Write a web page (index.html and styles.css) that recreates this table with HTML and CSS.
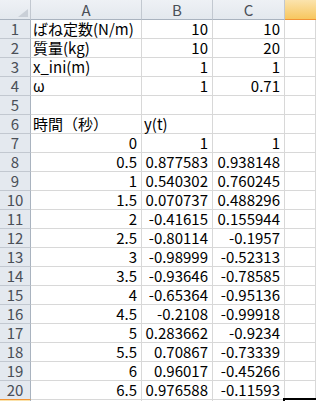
FILE: index.html
```html
<!DOCTYPE html>
<html lang="ja">
<head>
<meta charset="utf-8">
<link rel="stylesheet" href="styles.css">
</head>
<body>
<div class="sheet">
  <div class="hd corner"><span class="tri"></span></div>
  <div class="hd col">A</div>
  <div class="hd col">B</div>
  <div class="hd col">C</div>
  <div class="hd col sel"></div>

  <div class="hd row">1</div><div class="c">ばね定数(N/m)</div><div class="c n">10</div><div class="c n">10</div><div class="c"></div>
  <div class="hd row">2</div><div class="c">質量(kg)</div><div class="c n">10</div><div class="c n">20</div><div class="c"></div>
  <div class="hd row">3</div><div class="c">x_ini(m)</div><div class="c n">1</div><div class="c n">1</div><div class="c"></div>
  <div class="hd row">4</div><div class="c">ω</div><div class="c n">1</div><div class="c n">0.71</div><div class="c"></div>
  <div class="hd row">5</div><div class="c"></div><div class="c"></div><div class="c"></div><div class="c"></div>
  <div class="hd row">6</div><div class="c">時間（秒）</div><div class="c">y(t)</div><div class="c"></div><div class="c"></div>
  <div class="hd row">7</div><div class="c n">0</div><div class="c n">1</div><div class="c n">1</div><div class="c"></div>
  <div class="hd row">8</div><div class="c n">0.5</div><div class="c n">0.877583</div><div class="c n">0.938148</div><div class="c"></div>
  <div class="hd row">9</div><div class="c n">1</div><div class="c n">0.540302</div><div class="c n">0.760245</div><div class="c"></div>
  <div class="hd row">10</div><div class="c n">1.5</div><div class="c n">0.070737</div><div class="c n">0.488296</div><div class="c"></div>
  <div class="hd row">11</div><div class="c n">2</div><div class="c n">-0.41615</div><div class="c n">0.155944</div><div class="c"></div>
  <div class="hd row">12</div><div class="c n">2.5</div><div class="c n">-0.80114</div><div class="c n">-0.1957</div><div class="c"></div>
  <div class="hd row">13</div><div class="c n">3</div><div class="c n">-0.98999</div><div class="c n">-0.52313</div><div class="c"></div>
  <div class="hd row">14</div><div class="c n">3.5</div><div class="c n">-0.93646</div><div class="c n">-0.78585</div><div class="c"></div>
  <div class="hd row">15</div><div class="c n">4</div><div class="c n">-0.65364</div><div class="c n">-0.95136</div><div class="c"></div>
  <div class="hd row">16</div><div class="c n">4.5</div><div class="c n">-0.2108</div><div class="c n">-0.99918</div><div class="c"></div>
  <div class="hd row">17</div><div class="c n">5</div><div class="c n">0.283662</div><div class="c n">-0.9234</div><div class="c"></div>
  <div class="hd row">18</div><div class="c n">5.5</div><div class="c n">0.70867</div><div class="c n">-0.73339</div><div class="c"></div>
  <div class="hd row">19</div><div class="c n">6</div><div class="c n">0.96017</div><div class="c n">-0.45266</div><div class="c"></div>
  <div class="hd row prev">20</div><div class="c n">6.5</div><div class="c n">0.976588</div><div class="c n">-0.11593</div><div class="c"></div>
  <div class="hd row sel"></div><div class="c"></div><div class="c"></div><div class="c"></div><div class="c active"><span class="cursor"></span></div>
</div>
</body>
</html>
```
FILE: styles.css
```css
html, body {
  margin: 0;
  padding: 0;
  background: #ffffff;
  overflow: hidden;
}

.sheet {
  display: grid;
  grid-template-columns: 31px 111px 71px 72px 1fr;
  grid-template-rows: 20px repeat(21, 19px);
  width: 316px;
  font-family: "Noto Sans CJK JP", "Noto Sans", sans-serif;
  font-size: 15px;
}

.sheet > div {
  box-sizing: border-box;
  border-right: 1px solid #d8d8d8;
  border-bottom: 1px solid #d8d8d8;
  white-space: nowrap;
}

.c {
  display: flex;
  align-items: flex-end;
  line-height: 18px;
  padding: 0 2px 0 2px;
  color: #000;
}

.c.n {
  justify-content: flex-end;
  padding-right: 4px;
}

.hd {
  background: linear-gradient(#eef1f5, #e3e8ee);
  color: #4a4f57;
  display: flex;
  align-items: center;
  justify-content: center;
  font-size: 15px;
  line-height: 18px;
}

.sheet > .hd.col {
  border-right: 1px solid #c2c8d0;
  border-bottom: 1px solid #a9b3bf;
}

.sheet > .hd.row {
  background: #e4e9ef;
  border-right: 1px solid #a9b3bf;
  border-bottom: 1px solid #c2c8d0;
}

.sheet > .hd.corner {
  position: relative;
  border-right: 1px solid #c2c8d0;
  border-bottom: 1px solid #a9b3bf;
}

.tri {
  position: absolute;
  right: 2px;
  bottom: 2px;
  width: 10px;
  height: 8px;
  background: #c9cfd7;
  clip-path: polygon(100% 0, 100% 100%, 0 100%);
}

.sheet > .hd.col.sel {
  background: linear-gradient(#fbe3ad, #f7c75f);
  border-bottom: 1px solid #f29436;
  border-right: none;
}

.sheet > .hd.row.prev {
  border-bottom: 1px solid #f29436;
}

.sheet > .hd.row.sel {
  background: linear-gradient(#fbe3ad, #f7c75f);
}

.sheet > .c.active {
  position: relative;
  border-right: none;
}

.cursor {
  position: absolute;
  left: -2px;
  top: -2px;
  right: -2px;
  bottom: -2px;
  border: 2px solid #000;
}
```
